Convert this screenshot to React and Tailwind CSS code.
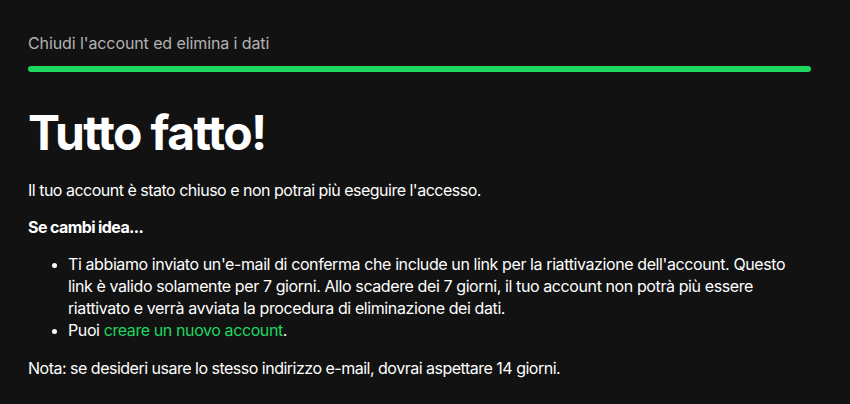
export default function App() {
  return (
    <div
      className="min-h-[404px] w-[850px] bg-[#121212] text-white px-[28px] pt-[31px]"
      style={{ fontFamily: 'Inter, "Noto Sans", sans-serif' }}
    >
      <div className="w-[783px]">
        <p className="text-[16px] leading-[24px] text-[#b3b3b3] tracking-[-0.1px]">
          Chiudi l'account ed elimina i dati
        </p>
        <div className="mt-[11px] h-[6px] w-full rounded-full bg-[#1ed760]" />

        <h1 className="mt-[33px] text-[48px] leading-[56px] font-bold tracking-[-1.6px]">
          Tutto fatto!
        </h1>

        <p className="mt-[18px] text-[16px] leading-[22px] tracking-[-0.5px]">
          Il tuo account è stato chiuso e non potrai più eseguire l'accesso.
        </p>

        <p className="mt-[15px] text-[16px] leading-[22px] font-bold tracking-[-0.6px]">
          Se cambi idea...
        </p>

        <ul className="mt-[15px] list-disc pl-[40px] pr-[24px] text-[16px] leading-[22px] tracking-[-0.4px] marker:text-[14px]">
          <li>
            Ti abbiamo inviato un'e-mail di conferma che include un link per la riattivazione dell'account.
            Questo link è valido solamente per 7 giorni. Allo scadere dei 7 giorni, il tuo account non potrà più
            essere riattivato e verrà avviata la procedura di eliminazione dei dati.
          </li>
          <li>
            Puoi <a className="text-[#1ed760]">creare un nuovo account</a>.
          </li>
        </ul>

        <p className="mt-[16px] text-[16px] leading-[22px] tracking-[-0.5px]">
          Nota: se desideri usare lo stesso indirizzo e-mail, dovrai aspettare 14 giorni.
        </p>
      </div>
    </div>
  )
}
